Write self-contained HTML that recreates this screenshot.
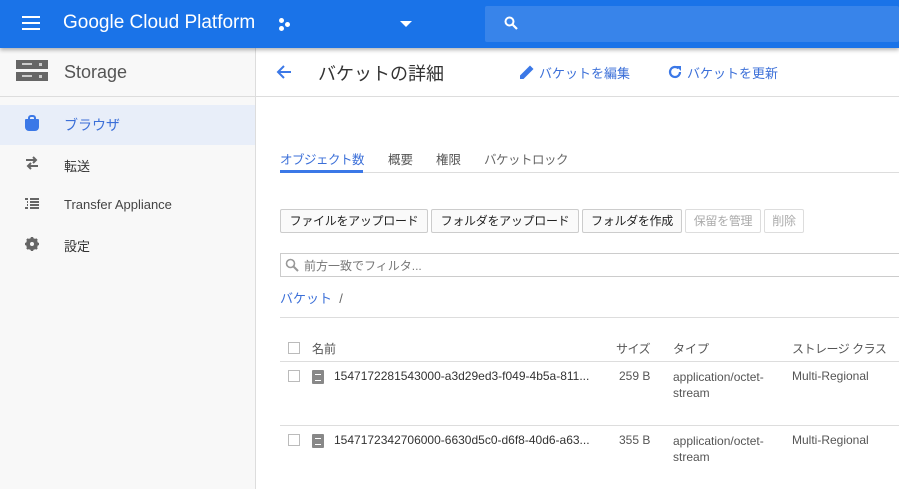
<!DOCTYPE html>
<html><head><meta charset="utf-8"><style>
*{box-sizing:border-box;margin:0;padding:0}
body{width:899px;height:489px;overflow:hidden;background:#fff;font-family:"Liberation Sans","Noto Sans CJK JP",sans-serif;color:#333;position:relative}
.abs{position:absolute}
.hdr{left:0;top:0;width:899px;height:48px;background:#1a73e8;box-shadow:0 2px 4px rgba(0,0,0,.3);z-index:2}
.side{left:0;top:48px;width:256px;height:441px;background:#f8f8f8;border-right:1px solid #ddd}
.t{white-space:nowrap}
.btn{position:absolute;top:209px;height:24px;border:1px solid #ccc;background:#fafafa;font-size:12px;line-height:22px;text-align:center;color:#222;border-radius:2px;white-space:nowrap;overflow:hidden;letter-spacing:-0.3px}
.btn.d{color:#aaa;border-color:#ddd;background:#fff}
.cb{position:absolute;width:12px;height:12px;border:1px solid #bbb;background:#fff}
.fi{position:absolute;width:12px;height:14px;background:#888;border-radius:1px}
.fi:after{content:"";position:absolute;left:3px;top:4px;width:6px;height:5px;border-top:1px solid #fff;border-bottom:1px solid #fff}
.c{font-size:12px;color:#555}
</style></head><body>
<div class="abs hdr">
 <div class="abs" style="left:22px;top:16px;width:18px;height:2px;background:#fff;box-shadow:0 6px 0 #fff,0 12px 0 #fff"></div>
 <div class="abs t" style="left:63px;top:12px;font-size:19px;color:#fff">Google Cloud Platform</div>
 <div class="abs" style="left:279px;top:18px;width:5px;height:5px;border-radius:50%;background:#fff;box-shadow:6px 4px 0 #fff,0 8px 0 #fff"></div>
 <div class="abs" style="left:400px;top:21px;border-left:6px solid transparent;border-right:6px solid transparent;border-top:6px solid #fff"></div>
 <div class="abs" style="left:485px;top:6px;width:414px;height:36px;background:#3884ea;border-radius:2px"></div>
 <svg class="abs" style="left:503px;top:15px" width="16" height="16" viewBox="0 0 16 16"><circle cx="6.5" cy="6.5" r="4" fill="none" stroke="#fff" stroke-width="2"/><path d="M9.5 9.5L14 14" stroke="#fff" stroke-width="2.2"/></svg>
</div>
<div class="abs side">
 <div class="abs" style="left:16px;top:12px;width:32px;height:9px;background:#666"></div>
 <div class="abs" style="left:16px;top:24px;width:32px;height:9px;background:#666"></div>
 <div class="abs" style="left:22px;top:15px;width:10px;height:2px;background:#ccc"></div><div class="abs" style="left:39px;top:15px;width:3px;height:3px;background:#ccc"></div>
 <div class="abs" style="left:22px;top:27px;width:10px;height:2px;background:#ccc"></div><div class="abs" style="left:39px;top:27px;width:3px;height:3px;background:#ccc"></div>
 <div class="abs t" style="left:64px;top:14px;font-size:18px;color:#555">Storage</div>
 <div class="abs" style="left:0;top:48px;width:255px;height:1px;background:#ddd"></div>
 <div class="abs" style="left:0;top:57px;width:255px;height:40px;background:#e8eef9"></div>
 <div class="abs" style="left:25px;top:71px;width:14px;height:12px;background:#3b78e7;border-radius:1px 1px 4px 4px"></div>
 <div class="abs" style="left:28px;top:67px;width:8px;height:6px;border:2px solid #3b78e7;border-bottom:none;border-radius:3px 3px 0 0"></div>
 <div class="abs t" style="left:64px;top:67px;font-size:14px;color:#3b6fd8">ブラウザ</div>
 <svg class="abs" style="left:25px;top:108px" width="14" height="14" viewBox="0 0 14 14"><path d="M1 4h10M8 1l3 3-3 3M13 10H3M6 7l-3 3 3 3" fill="none" stroke="#666" stroke-width="2"/></svg>
 <div class="abs t" style="left:64px;top:108px;font-size:13px;color:#333">転送</div>
 <svg class="abs" style="left:25px;top:150px" width="14" height="12" viewBox="0 0 14 12"><path d="M0 1h3M5 1h9M2 4h1M5 4h9M2 7h1M5 7h9M0 10h3M5 10h9" stroke="#666" stroke-width="2"/></svg>
 <div class="abs t" style="left:64px;top:149px;font-size:13px;color:#444">Transfer Appliance</div>
 <svg class="abs" style="left:25px;top:189px" width="14" height="14" viewBox="0 0 14 14"><circle cx="7" cy="7" r="4.5" fill="none" stroke="#666" stroke-width="3"/><path d="M7 0v14M0 7h14M2 2l10 10M12 2L2 12" stroke="#666" stroke-width="2.5"/><circle cx="7" cy="7" r="2" fill="#f8f8f8"/></svg>
 <div class="abs t" style="left:64px;top:188px;font-size:13px;color:#333">設定</div>
</div>
<div class="abs" style="left:256px;top:96px;width:643px;height:1px;background:#ddd"></div>
<svg class="abs" style="left:275px;top:63px" width="18" height="18" viewBox="0 0 18 18"><path d="M16 9H3M9 3L3 9l6 6" fill="none" stroke="#3b78e7" stroke-width="2"/></svg>
<div class="abs t" style="left:318px;top:60px;font-size:18px;color:#333">バケットの詳細</div>
<svg class="abs" style="left:519px;top:64px" width="16" height="16" viewBox="0 0 16 16"><path d="M1 15v-3.5L11 1.5 14.5 5 4.5 15z" fill="#3b78e7"/></svg>
<div class="abs t" style="left:539px;top:63px;font-size:13px;color:#3b6fd8">バケットを編集</div>
<svg class="abs" style="left:667px;top:64px" width="16" height="16" viewBox="0 0 16 16"><path d="M13 8a5 5 0 1 1-1.5-3.6" fill="none" stroke="#3b78e7" stroke-width="2.2"/><path d="M9 2h5v5z" fill="#3b78e7"/></svg>
<div class="abs t" style="left:687px;top:63px;font-size:13px;color:#3b6fd8">バケットを更新</div>
<div class="abs t" style="left:280px;top:149px;font-size:12.5px;color:#3b6fd8;letter-spacing:-0.5px">オブジェクト数</div>
<div class="abs t" style="left:388px;top:149px;font-size:12.5px;color:#555">概要</div>
<div class="abs t" style="left:436px;top:149px;font-size:12.5px;color:#555">権限</div>
<div class="abs t" style="left:484px;top:149px;font-size:12.5px;color:#666;letter-spacing:-0.5px">バケットロック</div>
<div class="abs" style="left:280px;top:172px;width:619px;height:1px;background:#ddd"></div>
<div class="abs" style="left:280px;top:170px;width:83px;height:3px;background:#3b78e7"></div>
<div class="btn" style="left:280px;width:148px">ファイルをアップロード</div>
<div class="btn" style="left:431px;width:148px">フォルダをアップロード</div>
<div class="btn" style="left:582px;width:100px">フォルダを作成</div>
<div class="btn d" style="left:685px;width:76px">保留を管理</div>
<div class="btn d" style="left:764px;width:40px">削除</div>
<div class="abs" style="left:280px;top:253px;width:625px;height:24px;border:1px solid #ccc"></div>
<svg class="abs" style="left:285px;top:258px" width="14" height="14" viewBox="0 0 14 14"><circle cx="5.5" cy="5.5" r="4" fill="none" stroke="#999" stroke-width="1.6"/><path d="M8.5 8.5L13 13" stroke="#999" stroke-width="2"/></svg>
<div class="abs t" style="left:304px;top:257px;font-size:12px;color:#777">前方一致でフィルタ...</div>
<div class="abs t" style="left:280px;top:288px;font-size:13px;color:#3b6fd8">バケット <span style="color:#666">&nbsp;/</span></div>
<div class="abs" style="left:280px;top:317px;width:619px;height:1px;background:#ddd"></div>
<div class="cb" style="left:288px;top:342px"></div>
<div class="abs t c" style="left:312px;top:340px">名前</div>
<div class="abs t c" style="left:616px;top:340px;letter-spacing:-0.5px">サイズ</div>
<div class="abs t c" style="left:673px;top:340px">タイプ</div>
<div class="abs t c" style="left:792px;top:340px;letter-spacing:-0.5px">ストレージ クラス</div>
<div class="abs" style="left:280px;top:361px;width:619px;height:1px;background:#ddd"></div>
<div class="cb" style="left:288px;top:370px"></div><div class="fi" style="left:312px;top:370px"></div>
<div class="abs t" style="left:334px;top:369px;font-size:12px;color:#333">1547172281543000-a3d29ed3-f049-4b5a-811...</div>
<div class="abs t c" style="left:619px;top:369px">259 B</div>
<div class="abs c" style="left:673px;top:369px;line-height:16px">application/octet-<br>stream</div>
<div class="abs t c" style="left:792px;top:369px">Multi-Regional</div>
<div class="abs" style="left:280px;top:425px;width:619px;height:1px;background:#ddd"></div>
<div class="cb" style="left:288px;top:434px"></div><div class="fi" style="left:312px;top:434px"></div>
<div class="abs t" style="left:334px;top:433px;font-size:12px;color:#333">1547172342706000-6630d5c0-d6f8-40d6-a63...</div>
<div class="abs t c" style="left:619px;top:433px">355 B</div>
<div class="abs c" style="left:673px;top:433px;line-height:16px">application/octet-<br>stream</div>
<div class="abs t c" style="left:792px;top:433px">Multi-Regional</div>
</body></html>
